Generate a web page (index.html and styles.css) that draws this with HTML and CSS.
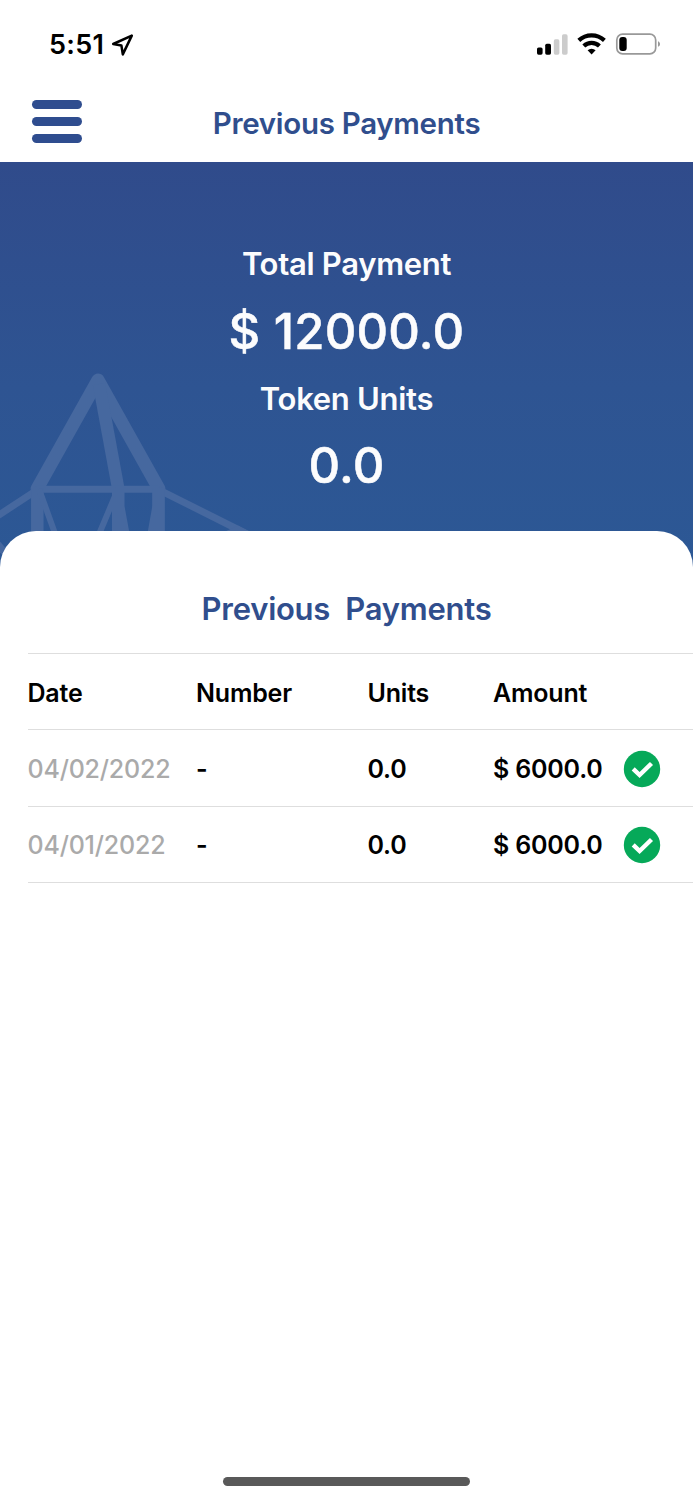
FILE: index.html
```html
<!DOCTYPE html>
<html lang="en">
<head>
<meta charset="utf-8">
<title>Previous Payments</title>
<link rel="stylesheet" href="styles.css">
</head>
<body>
<div class="screen">
  <div class="status-bar">
    <div class="clock">
      <span class="time">5:51</span>
      <svg class="location" width="24" height="24" viewBox="0 0 24 24"><path d="M20.800 2.600 2.200 11 10.400 12.400 11.800 21.400Z" fill="none" stroke="#000" stroke-width="2.500" stroke-linejoin="round"/></svg>
    </div>
    <svg class="indicators" width="126" height="24" viewBox="0 0 126 24">
      <rect x="1" y="14.500" width="5.600" height="7.200" rx="1.600" fill="#000"/>
      <rect x="9.200" y="10.700" width="5.800" height="11" rx="1.600" fill="#000"/>
      <rect x="17.800" y="6.300" width="5.600" height="15.400" rx="1.600" fill="#ccc"/>
      <rect x="26" y="1.300" width="5.600" height="20.400" rx="1.600" fill="#ccc"/>
      <g fill="none" stroke="#000" stroke-width="4.200">
        <path d="M42.800 7.400a18.800 18.800 0 0 1 25.600 0"/>
        <path d="M47.800 13a11.400 11.400 0 0 1 15.600 0"/>
      </g>
      <path d="M51.600 17.200a6 6 0 0 1 8 0L55.600 21.500Z" fill="#000"/>
      <rect x="80.800" y="1.200" width="38.900" height="19.600" rx="5.800" fill="none" stroke="#999" stroke-width="1.700"/>
      <rect x="83.300" y="3.900" width="7.400" height="14.200" rx="3" fill="#000"/>
      <path d="M122 8.200c2.700 1 2.700 4.600 0 5.600z" fill="#999"/>
    </svg>
  </div>
  <header class="nav">
    <div class="menu"><span></span><span></span><span></span></div>
    <h1 class="nav-title">Previous Payments</h1>
  </header>
  <section class="hero">
    <svg class="hero-art" width="260" height="240" viewBox="0 0 260 240">
      <g fill="none" stroke="#46689f" stroke-linejoin="round">
        <path d="M37 159 98 50 159 159" stroke-width="13" stroke-linecap="round"/>
        <path d="M99 54 118.500 160" stroke-width="12.500"/>
        <path d="M38 159.300H158M-4 187 38 159.300M158 159.300 263 212" stroke-width="7"/>
        <path d="M37.300 158V220M158.600 158V220" stroke-width="12.500"/>
        <path d="M39 159 57 209M118 159 97 209" stroke-width="6"/>
        <path d="M-6 210 20 240" stroke-width="7"/>
      </g>
      <path d="M112 158H124.500V176L130 206H112ZM152.500 158V175L147 206H163V158Z" fill="#46689f"/>
      <path d="M224 202 238 195.500 262 208V216H224Z" fill="#46689f"/>
    </svg>
    <div class="totals">
      <div class="label total-label">Total Payment</div>
      <div class="value total-value">$ 12000.0</div>
      <div class="label token-label">Token Units</div>
      <div class="value token-value">0.0</div>
    </div>
  </section>
  <main class="card">
    <h2 class="card-title">Previous&nbsp; Payments</h2>
    <div class="table">
      <div class="row head"><span>Date</span><span>Number</span><span>Units</span><span>Amount</span></div>
      <div class="row"><span class="date">04/02/2022</span><span>-</span><span>0.0</span><span class="amount">$ 6000.0</span>
        <svg class="check" width="38" height="38" viewBox="0 0 38 38"><circle cx="19" cy="19" r="18.200" fill="#06a959"/><path d="M10.200 18.800 16.600 25 28.500 13.500" fill="none" stroke="#fff" stroke-width="4.400"/></svg>
      </div>
      <div class="row"><span class="date">04/01/2022</span><span>-</span><span>0.0</span><span class="amount">$ 6000.0</span>
        <svg class="check" width="38" height="38" viewBox="0 0 38 38"><circle cx="19" cy="19" r="18.200" fill="#06a959"/><path d="M10.200 18.800 16.600 25 28.500 13.500" fill="none" stroke="#fff" stroke-width="4.400"/></svg>
      </div>
    </div>
  </main>
  <div class="home-indicator"></div>
</div>
</body>
</html>
```
FILE: styles.css
```css
* { box-sizing: border-box; }
body { margin: 0; background: #fff; font-family: Inter, "Liberation Sans", sans-serif; color: #000; }
.screen { width: 693px; height: 1500px; display: flex; flex-direction: column; overflow: hidden; }
.status-bar { height: 88px; padding: 1px 31px 0 49px; display: flex; justify-content: space-between; align-items: center; }
.clock { display: flex; align-items: center; gap: 7px; }
.time { font-size: 27px; font-weight: 600; line-height: 34px; letter-spacing: 0.3px; white-space: nowrap; }
.nav { height: 74px; padding: 0 32px; display: grid; grid-template-columns: 50px 1fr 50px; align-items: center; }
.menu { display: flex; flex-direction: column; gap: 8px; margin-bottom: 8px; }
.menu span { height: 9px; border-radius: 5px; background: #2f4d8f; }
.nav-title { margin: 0 0 4px; text-align: center; font-size: 29.500px; line-height: 40px; font-weight: 600; letter-spacing: -0.3px; color: #304e8d; white-space: nowrap; }
.hero { height: 410px; flex: none; display: grid; background: linear-gradient(#304b8b, #2e5492 55%, #2c5895); color: #fcfcfd; overflow: hidden; }
.hero-art { grid-area: 1 / 1; align-self: start; margin-top: 168px; }
.totals { grid-area: 1 / 1; padding-top: 77px; text-align: center; z-index: 1; white-space: nowrap; }
.label { font-size: 31px; font-weight: 600; letter-spacing: -0.3px; }
.value { font-size: 49px; font-weight: 500; letter-spacing: 0.2px; -webkit-text-stroke: 0.500px #fcfcfd; }
.total-label { line-height: 50px; }
.total-value { line-height: 86px; }
.token-label { line-height: 48px; }
.token-value { line-height: 86px; }
.card { flex: 1; margin-top: -41px; padding: 58px 0 0 28px; border-radius: 36px 36px 0 0; background: #fff; z-index: 2; }
.card-title { margin: 0 28px 24px 0; text-align: center; font-size: 31px; line-height: 40px; font-weight: 600; letter-spacing: -0.25px; color: #304e8d; white-space: nowrap; }
.table { border-top: 1px solid #dedede; }
.row { height: 76.400px; display: grid; grid-template-columns: 168.500px 171.500px 125.500px 129px 1fr; align-items: center; padding-top: 1.500px; border-bottom: 1px solid #dedede; font-size: 25px; font-weight: 600; line-height: 34px; letter-spacing: -0.2px; white-space: nowrap; }
.row.head { padding-top: 2px; }
.row > span { margin-left: -0.500px; }
.date { color: #aaa; font-weight: 500; }
.home-indicator { width: 247px; height: 9px; flex: none; margin: 0 auto 14px; border-radius: 5px; background: #595959; }
```
